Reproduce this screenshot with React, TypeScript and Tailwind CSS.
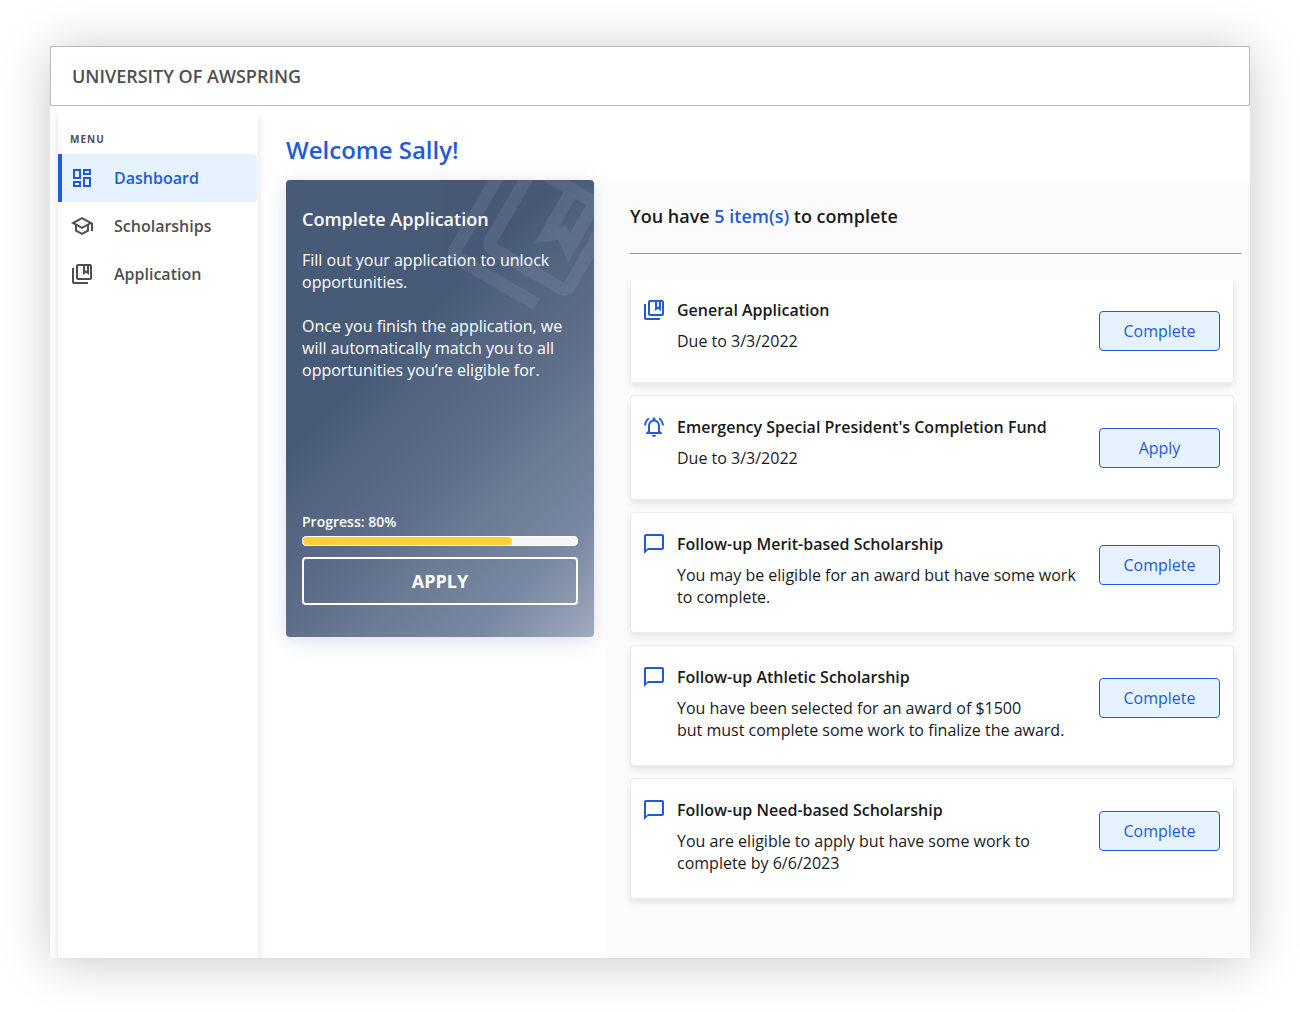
import type { IconType } from "react-icons";
import {
  MdChatBubbleOutline,
  MdOutlineCollectionsBookmark,
  MdOutlineDashboard,
  MdOutlineNotificationsActive,
  MdOutlineSchool,
} from "react-icons/md";
import clsx from "clsx";

type NavItem = { label: string; icon: IconType; active?: boolean };

type Task = {
  title: string;
  lines: string[];
  action: string;
  icon: IconType;
};

const navItems: NavItem[] = [
  { label: "Dashboard", icon: MdOutlineDashboard, active: true },
  { label: "Scholarships", icon: MdOutlineSchool },
  { label: "Application", icon: MdOutlineCollectionsBookmark },
];

const tasks: Task[] = [
  {
    title: "General Application",
    lines: ["Due to 3/3/2022"],
    action: "Complete",
    icon: MdOutlineCollectionsBookmark,
  },
  {
    title: "Emergency Special President's Completion Fund",
    lines: ["Due to 3/3/2022"],
    action: "Apply",
    icon: MdOutlineNotificationsActive,
  },
  {
    title: "Follow-up Merit-based Scholarship",
    lines: ["You may be eligible for an award but have some work to complete."],
    action: "Complete",
    icon: MdChatBubbleOutline,
  },
  {
    title: "Follow-up Athletic Scholarship",
    lines: [
      "You have been selected for an award of $1500",
      "but must complete some work to finalize the award.",
    ],
    action: "Complete",
    icon: MdChatBubbleOutline,
  },
  {
    title: "Follow-up Need-based Scholarship",
    lines: ["You are eligible to apply but have some work to complete by 6/6/2023"],
    action: "Complete",
    icon: MdChatBubbleOutline,
  },
];

function Sidebar() {
  return (
    <nav className="ml-2 mt-1 w-[200px] shrink-0 bg-white pr-px pt-[23px] shadow-[0_6px_8px_rgba(0,0,0,0.13)]">
      <h2 className="px-3 pb-[9px] text-[10px] font-bold leading-3 tracking-[1px] text-[#4f4f4f]">
        MENU
      </h2>
      <ul>
        {navItems.map(({ label, icon: Icon, active }) => (
          <li key={label}>
            <a
              href="#"
              className={clsx(
                "flex h-12 items-center gap-5 rounded-r border-l-4 pl-2 font-semibold",
                active
                  ? "border-[#1f5bd8] bg-[#e6f2ff] text-[#1f5bd8]"
                  : "border-transparent text-[#4f4f4f]"
              )}
            >
              <Icon size={24} />
              {label}
            </a>
          </li>
        ))}
      </ul>
    </nav>
  );
}

function ApplicationCard({ progress }: { progress: number }) {
  return (
    <section className="relative flex h-[457px] w-[308px] shrink-0 flex-col overflow-hidden rounded bg-[linear-gradient(135deg,#475a78_0%,#475a78_36%,#50637f_43%,#5c6b88_56%,#6b7c94_70%,#7887a1_84%,#8e9bb0_93%,#a0aabd_100%)] p-4 text-white">
      {/* oversized watermark bleeding off the top right corner */}
      <MdOutlineCollectionsBookmark
        size={156}
        className="absolute -right-4 -top-6 rotate-30 opacity-[0.07]"
      />
      <h2 className="mt-[11px] text-lg font-semibold leading-6">Complete Application</h2>
      <p className="mt-[18px] leading-[22px]">
        Fill out your application to unlock opportunities.
      </p>
      <p className="mt-[22px] leading-[22px]">
        Once you finish the application, we will automatically match you to all
        opportunities you’re eligible for.
      </p>
      <div id="progress-label" className="mt-auto text-sm font-semibold leading-5">
        Progress: {progress}%
      </div>
      <div
        role="progressbar"
        aria-labelledby="progress-label"
        aria-valuenow={progress}
        className="mt-1 h-[10px] rounded-[4px] border border-white bg-[#f5f5f5]"
      >
        <div className="h-2 w-[209px] rounded-[4px] bg-[#ffd033]" />
      </div>
      <button className="mb-4 mt-[11px] h-12 shrink-0 rounded border-2 border-white text-lg font-bold">
        APPLY
      </button>
    </section>
  );
}

function TaskCard({ task }: { task: Task }) {
  const Icon = task.icon;
  return (
    <li className="flex items-start rounded border border-[#ededed] bg-white pb-6 pl-[11px] pr-[13px] pt-[19px] shadow-[0_4px_6px_rgba(0,0,0,0.09)] first:rounded-t-none first:border-t-0 first:pt-[18px]">
      <Icon size={24} className="shrink-0 text-[#1f5bd8]" />
      <div className="ml-[11px] min-h-[60px] flex-1">
        <h3 className="font-semibold leading-6">{task.title}</h3>
        <div className="mt-2 pr-5 leading-[22px]">
          {task.lines.map((line) => (
            <p key={line}>{line}</p>
          ))}
        </div>
      </div>
      <button className="mt-[13px] h-10 w-[121px] shrink-0 rounded border border-[#1f5bd8] bg-[#e6f2ff] text-[#1f5bd8]">
        {task.action}
      </button>
    </li>
  );
}

export default function App() {
  return (
    <div className="flex min-h-screen flex-col bg-white px-[50px] pb-[54px] pt-[46px] font-['Open_Sans',sans-serif] text-base text-[#1a1a1a]">
      <div className="flex flex-1 flex-col bg-white shadow-[0_4px_48px_rgba(0,0,0,0.22)]">
        <header className="z-10 flex h-[60px] items-center border border-[#bababa] bg-white px-[21px]">
          <h1 className="text-lg font-semibold text-[#4f4f4f]">UNIVERSITY OF AWSPRING</h1>
        </header>
        <div className="flex flex-1 overflow-hidden">
          <Sidebar />
          <main className="flex flex-1 flex-col pl-7">
            <h2 className="mt-7 text-2xl font-semibold leading-8 text-[#1f5bd8]">
              Welcome Sally!
            </h2>
            <div className="mt-[14px] flex flex-1 items-start gap-3">
              <div className="rounded shadow-[0_4px_20px_rgba(70,90,150,0.2)]">
                <ApplicationCard progress={80} />
              </div>
              <section className="flex-1 self-stretch bg-[#fbfbfb] pb-[59px] pl-6 pr-[9px]">
                <h2 className="border-b border-[#949494] pb-6 pt-6 text-lg font-semibold leading-[25px]">
                  You have <span className="text-[#1f5bd8]">5 item(s)</span> to complete
                </h2>
                <ul className="mr-[7px] mt-[26px] flex flex-col gap-3">
                  {tasks.map((task) => (
                    <TaskCard key={task.title} task={task} />
                  ))}
                </ul>
              </section>
            </div>
          </main>
        </div>
      </div>
    </div>
  );
}
